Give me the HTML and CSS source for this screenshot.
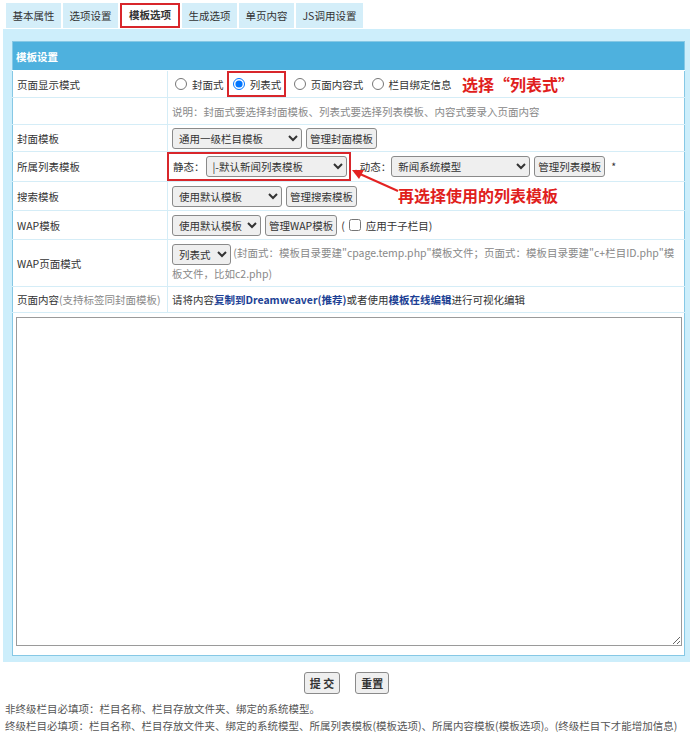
FILE: index.html
```html
<!DOCTYPE html>
<html lang="zh-CN">
<head>
<meta charset="utf-8">
<title>模板选项</title>
<link rel="stylesheet" href="styles.css">
</head>
<body>
<div class="tabs">
  <span class="tab">基本属性</span>
  <span class="tab">选项设置</span>
  <span class="tab active">模板选项</span>
  <span class="tab">生成选项</span>
  <span class="tab">单页内容</span>
  <span class="tab">JS调用设置</span>
</div>
<div class="panel">
  <table class="form">
    <tr class="head"><td colspan="2">模板设置</td></tr>
    <tr class="r1">
      <td class="lbl">页面显示模式</td>
      <td class="val">
        <label class="opt"><input type="radio" name="mode">封面式</label>
        <span class="mark"><label class="opt"><input type="radio" name="mode" checked>列表式</label></span>
        <label class="opt"><input type="radio" name="mode">页面内容式</label>
        <label class="opt"><input type="radio" name="mode">栏目绑定信息</label>
        <span class="note1">选择“列表式”</span>
      </td>
    </tr>
    <tr class="r2">
      <td class="lbl"></td>
      <td class="val gray">说明：封面式要选择封面模板、列表式要选择列表模板、内容式要录入页面内容</td>
    </tr>
    <tr class="r3">
      <td class="lbl">封面模板</td>
      <td class="val"><select class="s129"><option>通用一级栏目模板</option></select><button class="btn">管理封面模板</button></td>
    </tr>
    <tr class="r4">
      <td class="lbl">所属列表模板</td>
      <td class="val"><span class="mark box2">静态：<select class="s140"><option>|-默认新闻列表模板</option></select></span><span class="sep">, 动态：</span><select class="s138"><option>新闻系统模型</option></select><button class="btn">管理列表模板</button><span class="star">*</span></td>
    </tr>
    <tr class="r5">
      <td class="lbl">搜索模板</td>
      <td class="val"><select class="s109"><option>使用默认模板</option></select><button class="btn">管理搜索模板</button></td>
    </tr>
    <tr class="r6">
      <td class="lbl">WAP模板</td>
      <td class="val"><select class="s88"><option>使用默认模板</option></select><button class="btn">管理WAP模板</button><span class="paren">(</span><label class="chk"><input type="checkbox">应用于子栏目)</label></td>
    </tr>
    <tr class="r7">
      <td class="lbl">WAP页面模式</td>
      <td class="val wrap"><select class="s58"><option>列表式</option></select><span class="gray"> (封面式：模板目录要建"cpage.temp.php"模板文件；页面式：模板目录要建"c+栏目ID.php"模板文件，比如c2.php)</span></td>
    </tr>
    <tr class="r8">
      <td class="lbl">页面内容<span class="gray">(支持标签同封面模板)</span></td>
      <td class="val">请将内容<a class="link">复制到Dreamweaver(推荐)</a>或者使用<a class="link">模板在线编辑</a>进行可视化编辑</td>
    </tr>
    <tr class="r9">
      <td colspan="2" class="areacell"><textarea class="area"></textarea></td>
    </tr>
  </table>
</div>
<div class="actions">
  <button class="btn big">提&nbsp;交</button>
  <button class="btn big">重置</button>
</div>
<div class="notes">
  <p>非终级栏目必填项：栏目名称、栏目存放文件夹、绑定的系统模型。</p>
  <p>终级栏目必填项：栏目名称、栏目存放文件夹、绑定的系统模型、所属列表模板(模板选项)、所属内容模板(模板选项)。(终级栏目下才能增加信息)</p>
</div>
<span class="note2">再选择使用的列表模板</span>
<svg class="arrow" width="60" height="36" viewBox="0 0 60 36">
  <line x1="56" y1="30" x2="18" y2="13" stroke="#e32222" stroke-width="2"/>
  <polygon points="10,9 22,9 17,18" fill="#e32222"/>
</svg>
</body>
</html>
```

FILE: styles.css
```css
* { box-sizing: border-box; }
html, body { margin: 0; padding: 0; }
body {
  position: relative;
  width: 693px;
  height: 738px;
  overflow: hidden;
  background: #fff;
  color: #333;
  font-family: "Noto Sans CJK SC", "Microsoft YaHei", "Noto Sans", sans-serif;
  font-size: 10.5px;
}
.tabs {
  display: flex;
  gap: 2px;
  padding: 3px 0 0 6px;
  height: 29px;
}
.tab {
  height: 25px;
  line-height: 25px;
  padding: 0 6.5px;
  background: #d4eef9;
  color: #333;
}
.tab.active {
  background: #fff;
  border: 2px solid #d8262b;
  line-height: 19px;
  padding: 0 7px;
  font-weight: bold;
}
.panel {
  margin: 0 3px;
  height: 633px;
  background: #cdeefb;
  padding: 12px 5px 7px 9px;
}
.form {
  width: 673px;
  border-collapse: collapse;
  border: 1px solid #86c8e5;
  background: #fff;
}
.form td {
  padding: 0 0 0 4px;
  border-bottom: 1px solid #d5edf7;
  vertical-align: middle;
}
.head td {
  height: 29px;
  background: #4eb1de;
  color: #fff;
  font-weight: bold;
  padding-left: 3px;
  border-bottom: 1px solid #fff;
}
.lbl {
  width: 155px;
  border-right: 1px solid #d5edf7;
  color: #333;
}
.val { padding-left: 4px; white-space: nowrap; }
.val.wrap { white-space: normal; line-height: 17px; padding-right: 6px; }
.r1 td { height: 26px; }
.r2 td { height: 27px; }
.r3 td { height: 27px; }
.r4 td { height: 30px; }
.r5 td { height: 29px; }
.r6 td { height: 29px; }
.r7 td { height: 47px; }
.r8 td { height: 26px; }
.gray { color: #888; }
.opt {
  display: inline-flex;
  align-items: center;
  gap: 5px;
  margin-right: 3px;
  vertical-align: middle;
}
.opt input {
  margin: 0 0 0 3px;
  width: 12px;
  height: 12px;
}
.mark {
  display: inline-flex;
  align-items: center;
  border: 2px solid #d8262b;
  height: 26px;
  padding: 0 3px 0 1px;
  margin: 0 2px 0 -2px;
  vertical-align: middle;
}
.mark .opt { margin-right: 0; }
.note1 {
  color: #e0201c;
  font-weight: bold;
  font-size: 16px;
  margin-left: 5px;
  vertical-align: middle;
}
select {
  height: 21px;
  font-family: inherit;
  font-size: 10.5px;
  color: #333;
  background: #efefef;
  border: 1px solid #8a8a8a;
  border-radius: 3px;
  padding: 0 2px;
  vertical-align: middle;
}
.s129 { width: 130px; }
.s140 { width: 141px; }
.s138 { width: 139px; }
.s109 { width: 110px; }
.s88 { width: 89px; }
.s58 { width: 59px; }
.btn {
  height: 21px;
  font-family: inherit;
  font-size: 10.5px;
  color: #333;
  background: #efefef;
  border: 1px solid #8a8a8a;
  border-radius: 3px;
  padding: 0 3px;
  margin-left: 4px;
  vertical-align: middle;
}
.box2 {
  height: 29px;
  margin-left: -5px;
  padding-left: 4px;
  padding-right: 2px;
}
.box2 select { margin-left: 1px; }
.sep { margin-left: 2px; vertical-align: middle; }
.star { margin-left: 6px; vertical-align: middle; }
.paren { margin-left: 4px; vertical-align: middle; }
.chk {
  display: inline-flex;
  align-items: center;
  gap: 5px;
  vertical-align: middle;
  margin-left: 4px;
}
.chk input { margin: 0; width: 12px; height: 12px; }
.link { color: #1c3f94; font-weight: bold; text-decoration: none; }
.areacell { padding: 4px 0 9px 3px !important; border-bottom: 0 !important; }
.area {
  display: block;
  width: 666px;
  height: 329px;
  border: 1px solid #9a9a9a;
  resize: both;
  font-family: inherit;
}
.actions {
  display: flex;
  justify-content: center;
  gap: 15px;
  margin-top: 10px;
  padding-right: 0;
}
.btn.big {
  margin: 0;
  height: 22px;
  padding: 0 5px;
  font-size: 11px;
  font-weight: bold;
}
.notes {
  margin-top: 6px;
  padding-left: 5px;
  color: #555;
}
.notes p { margin: 0; line-height: 17px; white-space: nowrap; }
.note2 {
  position: absolute;
  left: 398px;
  top: 183px;
  color: #e0201c;
  font-weight: bold;
  font-size: 16px;
}
.arrow {
  position: absolute;
  left: 342px;
  top: 161px;
}
```
